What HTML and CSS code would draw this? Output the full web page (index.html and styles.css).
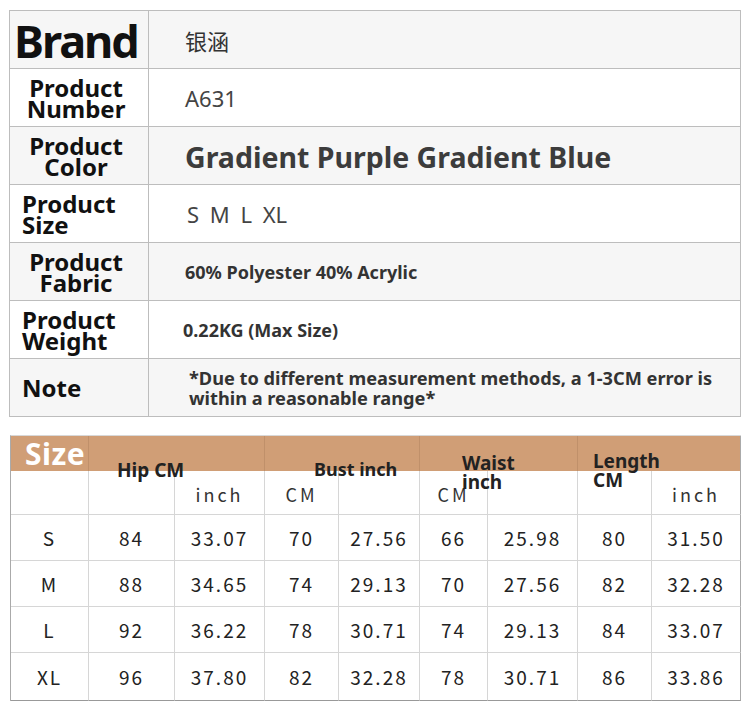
FILE: index.html
```html
<!DOCTYPE html>
<html>
<head>
<meta charset="utf-8">
<link rel="stylesheet" href="styles.css">
</head>
<body>
<div class="page">
  <div class="spec">
    <div class="row gray">
      <div class="label brand">Brand</div>
      <div class="value cjk">银涵</div>
    </div>
    <div class="row">
      <div class="label center">Product<br>Number</div>
      <div class="value plain">A631</div>
    </div>
    <div class="row gray">
      <div class="label center">Product<br>Color</div>
      <div class="value big">Gradient Purple Gradient Blue</div>
    </div>
    <div class="row">
      <div class="label left">Product<br>Size</div>
      <div class="value plain sizes">S M L XL</div>
    </div>
    <div class="row gray">
      <div class="label center">Product<br>Fabric</div>
      <div class="value small">60% Polyester 40% Acrylic</div>
    </div>
    <div class="row">
      <div class="label left">Product<br>Weight</div>
      <div class="value small weight">0.22KG (Max Size)</div>
    </div>
    <div class="row gray">
      <div class="label left">Note</div>
      <div class="value small note">*Due to different measurement methods, a 1-3CM error is<br>within a reasonable range*</div>
    </div>
  </div>

  <div class="chart">
    <div class="band">
      <div class="bcell size-head">Size</div>
      <div class="bcell group g-hip"><span class="glabel">Hip CM</span></div>
      <div class="bcell group g-bust"><span class="glabel">Bust inch</span></div>
      <div class="bcell group g-waist"><span class="glabel">Waist<br>inch</span></div>
      <div class="bcell group g-length last"><span class="glabel">Length<br>CM</span></div>
    </div>
    <div class="grid sub">
      <div class="c"></div><div class="c"></div><div class="c">inch</div><div class="c">CM</div><div class="c"></div><div class="c">CM</div><div class="c"></div><div class="c"></div><div class="c last">inch</div>
    </div>
    <div class="grid data">
      <div class="c">S</div><div class="c">84</div><div class="c">33.07</div><div class="c">70</div><div class="c">27.56</div><div class="c">66</div><div class="c">25.98</div><div class="c">80</div><div class="c last">31.50</div>
    </div>
    <div class="grid data">
      <div class="c">M</div><div class="c">88</div><div class="c">34.65</div><div class="c">74</div><div class="c">29.13</div><div class="c">70</div><div class="c">27.56</div><div class="c">82</div><div class="c last">32.28</div>
    </div>
    <div class="grid data">
      <div class="c">L</div><div class="c">92</div><div class="c">36.22</div><div class="c">78</div><div class="c">30.71</div><div class="c">74</div><div class="c">29.13</div><div class="c">84</div><div class="c last">33.07</div>
    </div>
    <div class="grid data lastrow">
      <div class="c">XL</div><div class="c">96</div><div class="c">37.80</div><div class="c">82</div><div class="c">32.28</div><div class="c">78</div><div class="c">30.71</div><div class="c">86</div><div class="c last">33.86</div>
    </div>
  </div>
</div>
</body>
</html>
```

FILE: styles.css
```css
* { box-sizing: border-box; }
html, body { margin: 0; padding: 0; background: #fff; }
body { font-family: "Noto Sans", "Noto Sans CJK SC", sans-serif; color: #222; }

.page { padding: 10px 10px 0 9px; width: 750px; }

/* ---------- spec table ---------- */
.spec {
  width: 732px;
  border-top: 1px solid #bdbdbd;
  border-left: 1px solid #bdbdbd;
}
.row {
  display: grid;
  grid-template-columns: 139px 1fr;
  height: 58px;
  background: #fff;
}
.row.gray { background: #f6f6f6; }
.row > div {
  border-right: 1px solid #bdbdbd;
  border-bottom: 1px solid #bdbdbd;
  display: flex;
  align-items: center;
}
.label {
  font-weight: 700;
  color: #111;
  font-size: 24px;
  line-height: 21px;
}
.label.center { justify-content: center; text-align: center; padding-right: 6px; }
.label.left { padding-left: 12px; }
.label.brand {
  font-size: 45px;
  letter-spacing: -2px;
  padding-left: 4px;
  padding-top: 2px;
}
.value {
  padding-left: 36px;
  color: #444;
}
.value.cjk { font-family: "Noto Sans CJK SC", sans-serif; font-size: 22px; color: #333; }
.value.plain { font-size: 22px; }
.value.sizes { padding-left: 38px; word-spacing: 5px; }
.value.big { font-size: 28.5px; font-weight: 700; color: #3c3c3c; padding-top: 2px; }
.value.small { font-size: 18px; font-weight: 700; color: #333; }
.value.weight { padding-left: 34px; }
.value.note { padding-left: 40px; line-height: 20px; font-size: 18.2px; }

/* ---------- size chart ---------- */
.chart {
  margin-top: 18px;
  width: 731px;
  border-top: 1px solid #d8d8d8;
  border-left: 1px solid #aaa;
  margin-left: 1px;
}
.band, .grid {
  display: grid;
  grid-template-columns: 78px 86px 90px 74px 81px 68px 90px 74px 89px;
}
.band {
  height: 35px;
  background: #d09e76;
}
.bcell { border-right: 1px solid #c0906a; position: relative; }
.bcell.last { border-right: 1px solid #aaa; }
.size-head {
  grid-column: span 1;
  color: #fff;
  font-weight: 700;
  font-size: 30px;
  line-height: 35px;
  padding-left: 14px;
  letter-spacing: 0.5px;
}
.group { grid-column: span 2; }
.glabel {
  position: absolute;
  font-weight: 700;
  font-size: 19px;
  line-height: 19px;
  color: #222;
  white-space: nowrap;
  z-index: 2;
}
.g-hip .glabel { left: 28px; top: 25px; }
.g-bust .glabel { left: 49px; top: 24px; font-size: 18px; }
.g-waist .glabel { left: 42px; top: 18px; }
.g-length .glabel { left: 15px; top: 16px; }

.grid .c {
  border-right: 1px solid #d6d6d6;
  border-bottom: 1px solid #d6d6d6;
  display: flex;
  align-items: center;
  justify-content: center;
  font-family: "Noto Sans CJK SC", "Noto Sans", sans-serif;
  font-size: 19px;
  letter-spacing: 2px;
  color: #222;
}
.grid .c.last { border-right: 1px solid #aaa; }
.sub { height: 44px; }
.sub .c { font-size: 18px; letter-spacing: 3px; color: #333; padding-top: 2px; }
.data { height: 46px; }
.data.lastrow { height: 48px; }
.data.lastrow .c { border-bottom: 1px solid #999; }
```
